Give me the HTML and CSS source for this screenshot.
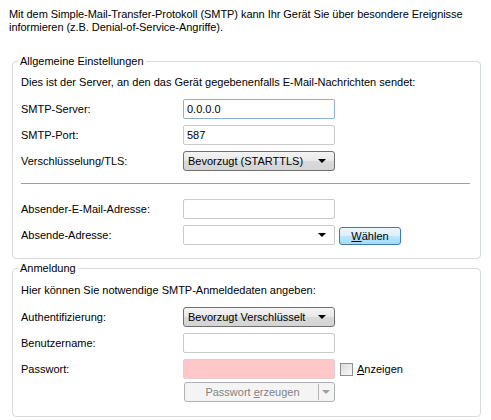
FILE: index.html
```html
<!DOCTYPE html>
<html lang="de">
<head>
<meta charset="utf-8">
<link rel="stylesheet" href="styles.css">
</head>
<body>
<p class="intro">Mit dem Simple-Mail-Transfer-Protokoll (SMTP) kann Ihr Gerät Sie über besondere Ereignisse informieren (z.B. Denial-of-Service-Angriffe).</p>

<fieldset class="group group-general">
  <legend>Allgemeine Einstellungen</legend>
  <div class="desc">Dies ist der Server, an den das Gerät gegebenenfalls E-Mail-Nachrichten sendet:</div>
  <div class="rows">
    <label class="lbl">SMTP-Server:</label>
    <div class="field focus">0.0.0.0</div>
    <label class="lbl">SMTP-Port:</label>
    <div class="field">587</div>
    <label class="lbl">Verschlüsselung/TLS:</label>
    <div class="select"><span>Bevorzugt (STARTTLS)</span><i class="arrow"></i></div>
  </div>
  <div class="sep"></div>
  <div class="rows">
    <label class="lbl">Absender-E-Mail-Adresse:</label>
    <div class="field"></div>
    <label class="lbl">Absende-Adresse:</label>
    <div class="combo-line">
      <div class="field combo"><i class="arrow"></i></div>
      <div class="btn"><u>W</u>ählen</div>
    </div>
  </div>
</fieldset>

<fieldset class="group group-login">
  <legend>Anmeldung</legend>
  <div class="desc">Hier können Sie notwendige SMTP-Anmeldedaten angeben:</div>
  <div class="rows">
    <label class="lbl">Authentifizierung:</label>
    <div class="select"><span>Bevorzugt Verschlüsselt</span><i class="arrow"></i></div>
    <label class="lbl">Benutzername:</label>
    <div class="field"></div>
    <label class="lbl">Passwort:</label>
    <div class="pw-line">
      <div class="field pink"></div>
      <div class="check"><span class="box"></span><span><u>A</u>nzeigen</span></div>
    </div>
  </div>
  <div class="gen-line">
    <div class="gen-btn"><span class="gen-text">Passwort <u>e</u>rzeugen</span><span class="gen-split"></span><i class="arrow gray"></i></div>
  </div>
</fieldset>
</body>
</html>
```

FILE: styles.css
```css
* { box-sizing: border-box; }
html, body { margin: 0; padding: 0; background: #fff; }
body {
  font-family: "Liberation Sans", Arial, sans-serif;
  font-size: 11px;
  line-height: 13px;
  color: #000;
  width: 491px;
  height: 420px;
  overflow: hidden;
}
.intro {
  margin: 8px 9px 0 9px;
  height: 47px;
  letter-spacing: -0.05px;
}
.group {
  margin: 0 10px 0 12px;
  padding: 8px 10px 13px 8px;
  border: 1px solid #d5dadd;
  border-radius: 4px;
  min-width: 0;
}
.group-login {
  margin-top: 3px;
  padding-top: 9px;
  padding-bottom: 14px;
}
legend {
  padding: 0 2px;
  margin-left: -3px;
  line-height: 13px;
}
.desc { height: 13px; }
.rows {
  display: grid;
  grid-template-columns: 162px 1fr;
  grid-auto-rows: 20px;
  row-gap: 6px;
  margin-top: 10px;
  align-items: center;
}
.group-login .rows { margin-top: 10px; }
.lbl { display: block; }
.field {
  width: 152px;
  height: 20px;
  border: 1px solid #c8cbce;
  border-radius: 2px;
  padding: 3px 3px;
  background: #fff;
  line-height: 13px;
}
.field.focus { border-color: #8db2d4; }
.field.pink { background: #ffc8c8; border-color: #dfcfcf; }
.select {
  width: 152px;
  height: 20px;
  border: 1px solid #707070;
  border-radius: 3px;
  background: linear-gradient(#f4f4f4, #e8e8e8 50%, #d9d9d9 51%, #d4d4d4);
  display: flex;
  align-items: center;
  padding: 0 8px 0 4px;
  justify-content: space-between;
}
.arrow {
  display: block;
  width: 0;
  height: 0;
  border-left: 4px solid transparent;
  border-right: 4px solid transparent;
  border-top: 4px solid #000;
}
.arrow.gray { border-top-color: #a0a0a0; }
.sep {
  height: 1px;
  background: #a0a0a0;
  margin: 12px 0 0 0;
}
.sep + .rows { margin-top: 15px; }
.combo-line { display: flex; align-items: center; gap: 4px; }
.combo {
  display: flex;
  align-items: center;
  justify-content: flex-end;
  padding-right: 8px;
}
.btn {
  width: 62px;
  height: 18px;
  border: 1px solid #3d7bad;
  border-radius: 3px;
  background: linear-gradient(#eaf6fd, #d9f0fc 50%, #bee6fd 51%, #a7d9f5);
  text-align: center;
  line-height: 16px;
  margin-top: 1px;
}
.pw-line { display: flex; align-items: center; gap: 5px; }
.check { display: flex; align-items: center; gap: 4px; }
.box {
  width: 13px;
  height: 13px;
  border: 1px solid #8e8f8f;
  background: linear-gradient(135deg, #dcdcdc, #f8f8f8);
}
.gen-line { padding-left: 163px; margin-top: 3px; }
.gen-btn {
  width: 151px;
  height: 20px;
  border: 1px solid #adb2b5;
  border-radius: 3px;
  background: #f4f4f4;
  display: flex;
  align-items: center;
  color: #838383;
  padding-right: 4px;
}
.gen-text { flex: 1; text-align: center; padding-left: 2px; }
.gen-split { width: 1px; height: 16px; background: #b4b4b4; margin-right: 3px; }
```
